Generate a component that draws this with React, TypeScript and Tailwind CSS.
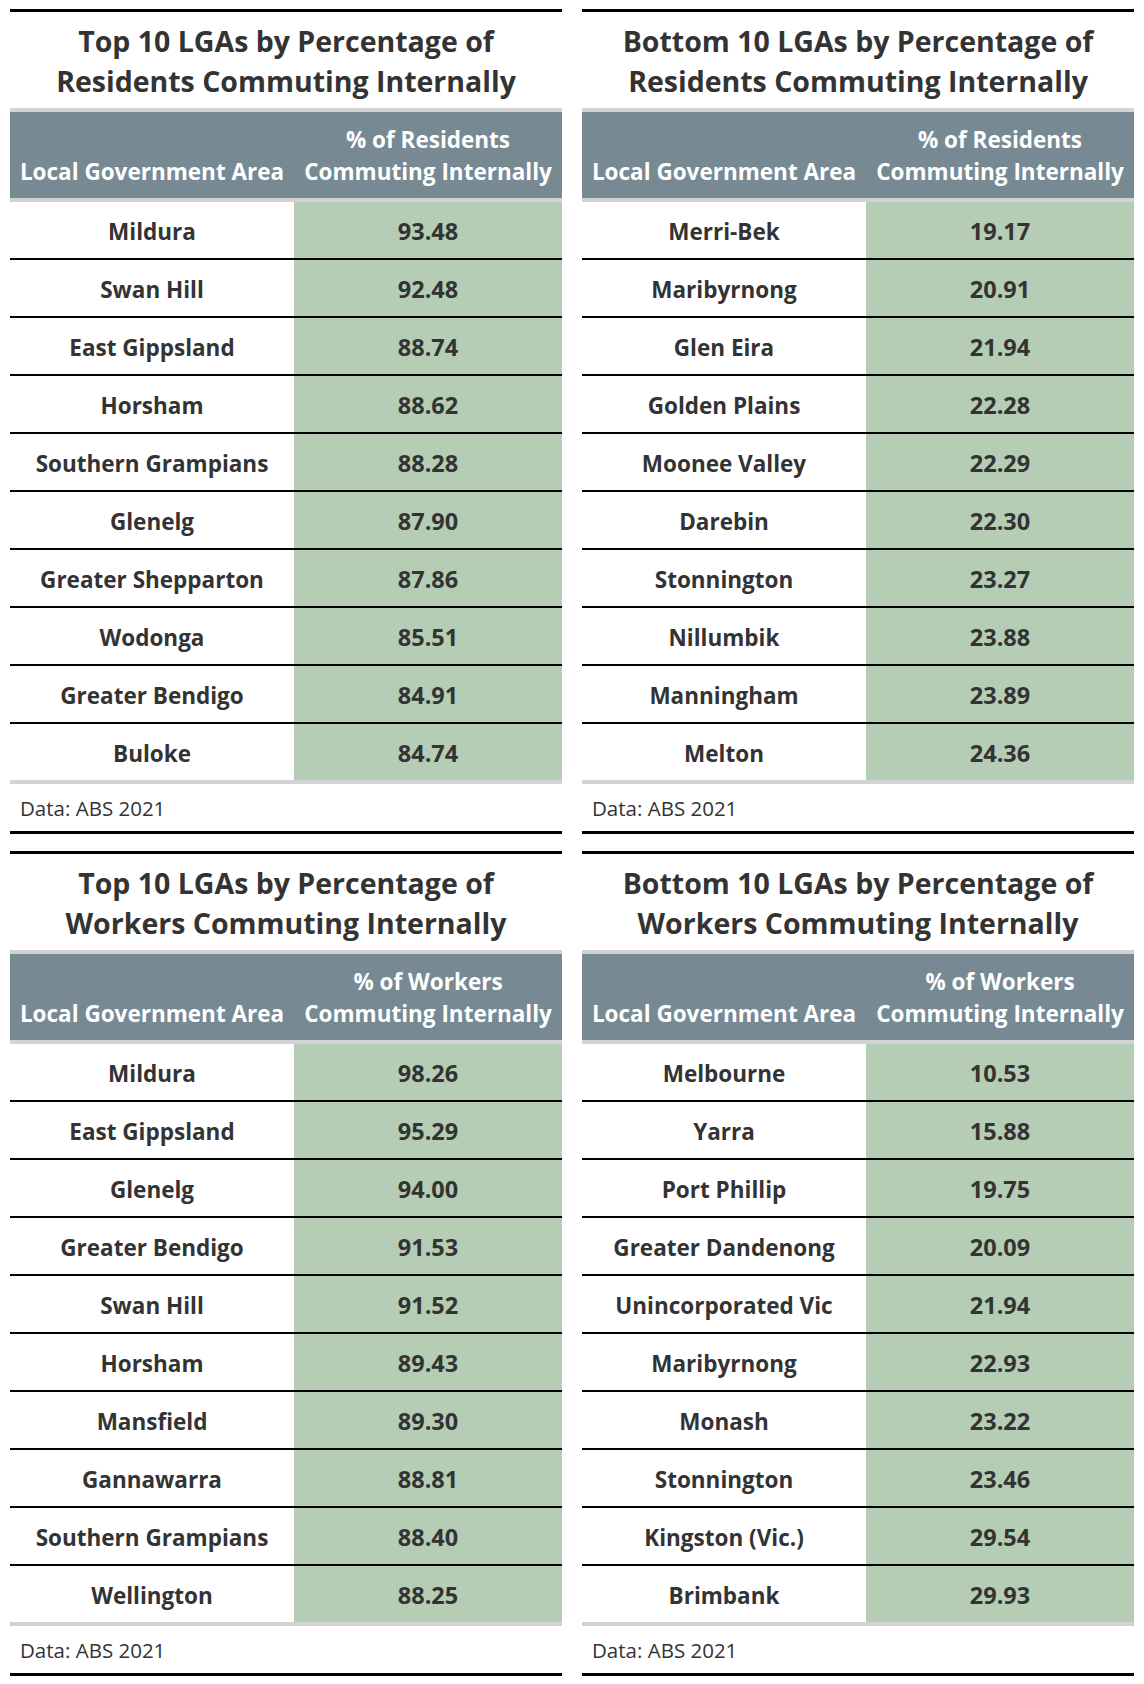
import React from "react";

type Row = [string, string];

const tables: { title: [string, string]; metric: string; rows: Row[] }[] = [
  {
    title: ["Top 10 LGAs by Percentage of", "Residents Commuting Internally"],
    metric: "% of Residents",
    rows: [
      ["Mildura", "93.48"],
      ["Swan Hill", "92.48"],
      ["East Gippsland", "88.74"],
      ["Horsham", "88.62"],
      ["Southern Grampians", "88.28"],
      ["Glenelg", "87.90"],
      ["Greater Shepparton", "87.86"],
      ["Wodonga", "85.51"],
      ["Greater Bendigo", "84.91"],
      ["Buloke", "84.74"],
    ],
  },
  {
    title: ["Bottom 10 LGAs by Percentage of", "Residents Commuting Internally"],
    metric: "% of Residents",
    rows: [
      ["Merri-Bek", "19.17"],
      ["Maribyrnong", "20.91"],
      ["Glen Eira", "21.94"],
      ["Golden Plains", "22.28"],
      ["Moonee Valley", "22.29"],
      ["Darebin", "22.30"],
      ["Stonnington", "23.27"],
      ["Nillumbik", "23.88"],
      ["Manningham", "23.89"],
      ["Melton", "24.36"],
    ],
  },
  {
    title: ["Top 10 LGAs by Percentage of", "Workers Commuting Internally"],
    metric: "% of Workers",
    rows: [
      ["Mildura", "98.26"],
      ["East Gippsland", "95.29"],
      ["Glenelg", "94.00"],
      ["Greater Bendigo", "91.53"],
      ["Swan Hill", "91.52"],
      ["Horsham", "89.43"],
      ["Mansfield", "89.30"],
      ["Gannawarra", "88.81"],
      ["Southern Grampians", "88.40"],
      ["Wellington", "88.25"],
    ],
  },
  {
    title: ["Bottom 10 LGAs by Percentage of", "Workers Commuting Internally"],
    metric: "% of Workers",
    rows: [
      ["Melbourne", "10.53"],
      ["Yarra", "15.88"],
      ["Port Phillip", "19.75"],
      ["Greater Dandenong", "20.09"],
      ["Unincorporated Vic", "21.94"],
      ["Maribyrnong", "22.93"],
      ["Monash", "23.22"],
      ["Stonnington", "23.46"],
      ["Kingston (Vic.)", "29.54"],
      ["Brimbank", "29.93"],
    ],
  },
];

function Table({ t }: { t: (typeof tables)[number] }) {
  return (
    <div className="border-t-[3px] border-b-[3px] border-black">
      <h2 className="text-center font-bold text-[28.5px] leading-[40px] pt-[9px] pb-[7px] text-[#333333]">
        {t.title[0]}
        <br />
        {t.title[1]}
      </h2>
      <div className="flex h-[94px] border-y-4 border-[#d3d3d3] bg-[#778a93] text-white font-bold text-[22.5px] leading-[32px]">
        <div className="w-[284px] shrink-0 flex items-end justify-center pb-[10px] whitespace-nowrap">
          Local Government Area
        </div>
        <div className="flex-1 flex flex-col items-center justify-center pt-[12px] pb-[10px] whitespace-nowrap">
          <span>{t.metric}</span>
          <span>Commuting Internally</span>
        </div>
      </div>
      <div className="divide-y-2 divide-black">
        {t.rows.map(([name, val]) => (
          <div key={name} className="flex h-[56px] box-content font-bold text-[#333333]">
            <div className="w-[284px] shrink-0 flex items-center justify-center bg-white pt-[3px] text-[22.5px]">
              {name}
            </div>
            <div className="flex-1 flex items-center justify-center bg-[#b5cdb4] pt-[3px] text-[23.5px]">
              {val}
            </div>
          </div>
        ))}
      </div>
      <div className="border-t-4 border-[#d3d3d3] h-[51px] flex items-center pl-[10px] pt-[1px] text-[20.5px] text-[#333333]">
        Data: ABS 2021
      </div>
    </div>
  );
}

export default function App() {
  return (
    <div
      className="w-[1144px] bg-white px-[10px] pt-[9px] pb-[8px] grid grid-cols-2 gap-x-[20px] gap-y-[17px]"
      style={{ fontFamily: '"Open Sans", "Noto Sans", sans-serif' }}
    >
      {tables.map((t) => (
        <Table key={t.title.join(" ") + t.metric} t={t} />
      ))}
    </div>
  );
}
